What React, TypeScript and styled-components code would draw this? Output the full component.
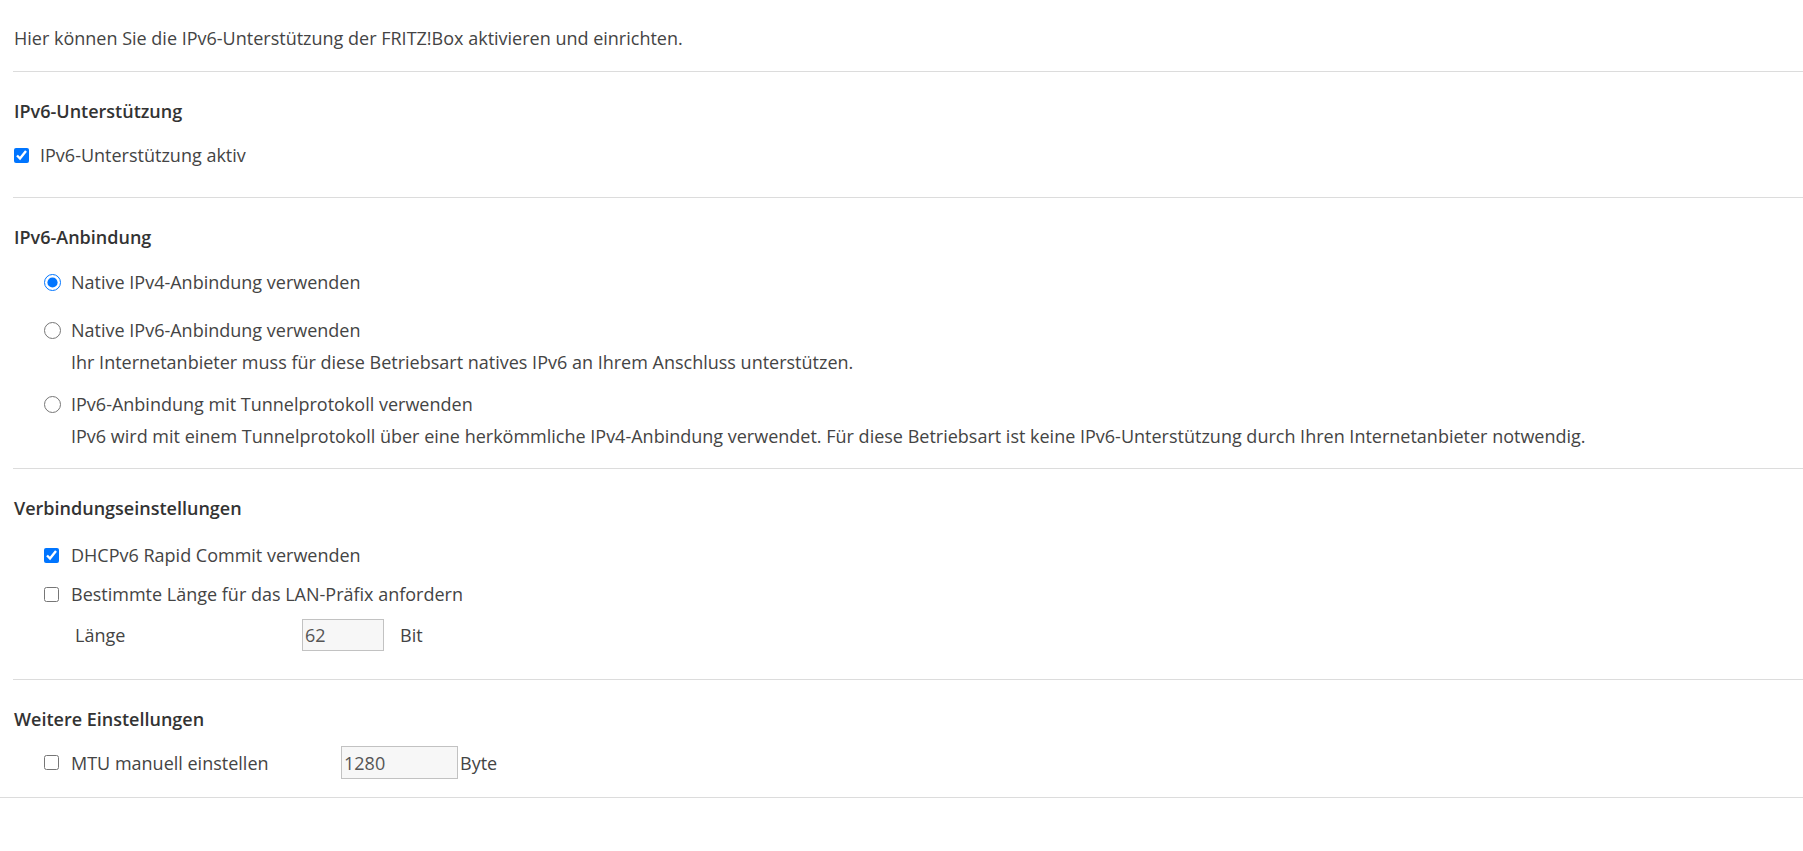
import React from "react";
import styled, { createGlobalStyle } from "styled-components";

const GlobalStyle = createGlobalStyle`
  html, body { margin: 0; padding: 0; background: #ffffff; }
  body {
    font-family: "Open Sans", "Noto Sans", sans-serif;
    font-size: 18px;
    line-height: 24px;
    color: #444444;
  }
`;

const Page = styled.div`
  padding-top: 26px;
`;

const Content = styled.div`
  padding-left: 13px;
`;

const Intro = styled.p`
  margin: 0 0 21px 1px;
  line-height: 24px;
`;

const Section = styled.section<{ $pb: number }>`
  border-top: 1px solid #dcdcdc;
  padding: 27px 0 ${(p) => p.$pb}px;
  display: flex;
  flex-direction: column;
`;

const Heading = styled.h2`
  margin: 0 0 0 1px;
  font-size: 18px;
  line-height: 24px;
  font-weight: 600;
  color: #333333;
`;

const OptionRow = styled.label<{ $mt: number; $indent: number; $gap: number }>`
  display: flex;
  align-items: center;
  height: 24px;
  margin-top: ${(p) => p.$mt}px;
  padding-left: ${(p) => p.$indent}px;
  gap: ${(p) => p.$gap}px;
  cursor: pointer;
`;

const Check = styled.input.attrs({ type: "checkbox" })`
  width: 15px;
  height: 15px;
  margin: 0;
  flex: none;
`;

const Radio = styled.input.attrs({ type: "radio" })`
  width: 17px;
  height: 17px;
  margin: 0;
  flex: none;
`;

const Description = styled.div`
  margin-top: 8px;
  padding-left: 58px;
  line-height: 24px;
`;

const FieldRow = styled.div<{ $mt: number }>`
  display: flex;
  align-items: center;
  margin-top: ${(p) => p.$mt}px;
`;

const FieldLabel = styled.span<{ $width: number; $pl: number }>`
  width: ${(p) => p.$width}px;
  padding-left: ${(p) => p.$pl}px;
  box-sizing: border-box;
  flex: none;
  display: flex;
  align-items: center;
`;

const NumberInput = styled.input<{ $width: number; $height: number }>`
  box-sizing: border-box;
  width: ${(p) => p.$width}px;
  height: ${(p) => p.$height}px;
  margin: 0;
  padding: 0 0 0 2px;
  border: 1px solid #c2c2c2;
  background: #f7f7f7;
  font-family: "Open Sans", "Noto Sans", sans-serif;
  font-size: 18px;
  color: #555555;
  outline: none;
`;

const Unit = styled.span<{ $ml: number }>`
  margin-left: ${(p) => p.$ml}px;
`;

const FooterRule = styled.div`
  border-top: 1px solid #dcdcdc;
`;

export default function App() {
  return (
    <>
      <GlobalStyle />
      <Page>
        <Content>
          <Intro>Hier können Sie die IPv6-Unterstützung der FRITZ!Box aktivieren und einrichten.</Intro>

          <Section $pb={30}>
            <Heading>IPv6-Unterstützung</Heading>
            <OptionRow $mt={20} $indent={1} $gap={11}>
              <Check defaultChecked />
              <span>IPv6-Unterstützung aktiv</span>
            </OptionRow>
          </Section>

          <Section $pb={20}>
            <Heading>IPv6-Anbindung</Heading>
            <OptionRow $mt={21} $indent={31} $gap={10}>
              <Radio name="anbindung" defaultChecked />
              <span>Native IPv4-Anbindung verwenden</span>
            </OptionRow>
            <OptionRow $mt={24} $indent={31} $gap={10}>
              <Radio name="anbindung" />
              <span>Native IPv6-Anbindung verwenden</span>
            </OptionRow>
            <Description>Ihr Internetanbieter muss für diese Betriebsart natives IPv6 an Ihrem Anschluss unterstützen.</Description>
            <OptionRow $mt={18} $indent={31} $gap={10}>
              <Radio name="anbindung" />
              <span>IPv6-Anbindung mit Tunnelprotokoll verwenden</span>
            </OptionRow>
            <Description>IPv6 wird mit einem Tunnelprotokoll über eine herkömmliche IPv4-Anbindung verwendet. Für diese Betriebsart ist keine IPv6-Unterstützung durch Ihren Internetanbieter notwendig.</Description>
          </Section>

          <Section $pb={28}>
            <Heading>Verbindungseinstellungen</Heading>
            <OptionRow $mt={23} $indent={31} $gap={12}>
              <Check defaultChecked />
              <span>DHCPv6 Rapid Commit verwenden</span>
            </OptionRow>
            <OptionRow $mt={15} $indent={31} $gap={12}>
              <Check />
              <span>Bestimmte Länge für das LAN-Präfix anfordern</span>
            </OptionRow>
            <FieldRow $mt={13}>
              <FieldLabel $width={289} $pl={62}>Länge</FieldLabel>
              <NumberInput $width={82} $height={32} defaultValue="62" />
              <Unit $ml={16}>Bit</Unit>
            </FieldRow>
          </Section>

          <Section $pb={18}>
            <Heading>Weitere Einstellungen</Heading>
            <FieldRow $mt={15}>
              <FieldLabel $width={328} $pl={31}>
                <OptionRow $mt={0} $indent={0} $gap={12}>
                  <Check />
                  <span>MTU manuell einstellen</span>
                </OptionRow>
              </FieldLabel>
              <NumberInput $width={117} $height={33} defaultValue="1280" />
              <Unit $ml={2}>Byte</Unit>
            </FieldRow>
          </Section>
        </Content>
        <FooterRule />
      </Page>
    </>
  );
}
